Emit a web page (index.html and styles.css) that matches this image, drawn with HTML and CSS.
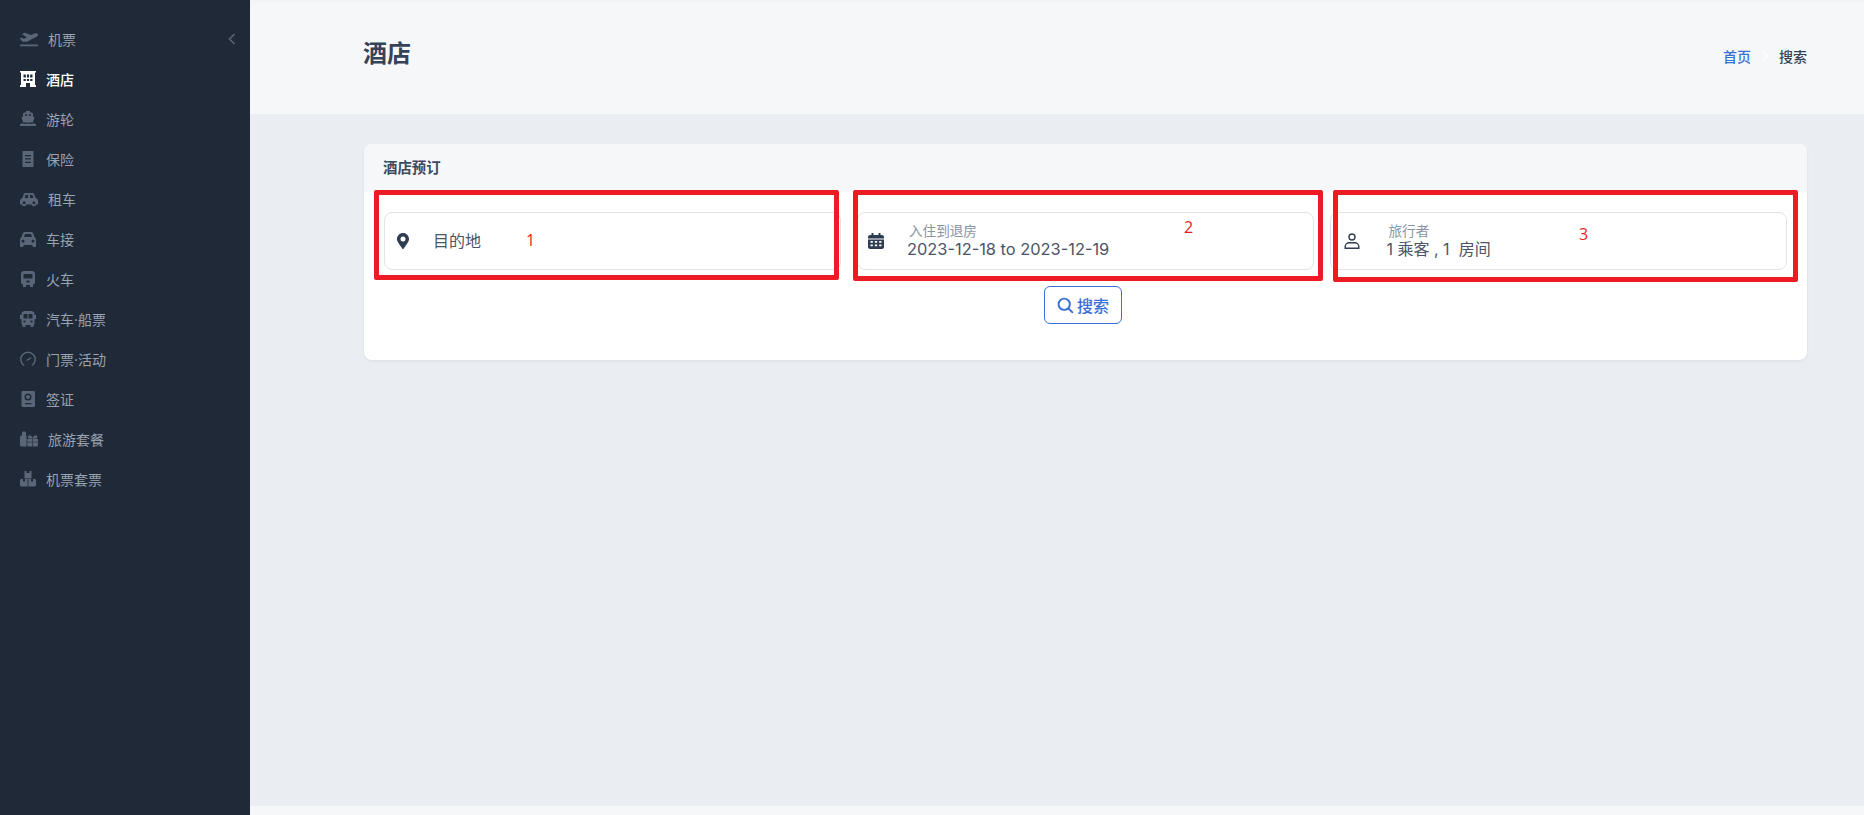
FILE: index.html
```html
<!DOCTYPE html>
<html lang="zh-CN">
<head>
  <meta charset="UTF-8">
  <meta name="viewport" content="width=device-width, initial-scale=1.0">
  <title>酒店</title>
  <link rel="stylesheet" href="styles.css">
</head>
<body>

<div class="layout">
  <aside class="sidebar">
    <ul class="nav">
      <li class="nav-item">
        <svg class="nav-icon wide" viewBox="0 0 640 512"><path d="M624 448H16c-8.84 0-16 7.16-16 16v32c0 8.84 7.16 16 16 16h608c8.84 0 16-7.16 16-16v-32c0-8.84-7.16-16-16-16zM80.55 341.27c6.28 6.84 15.1 10.72 24.33 10.71l130.54-.18a65.62 65.62 0 0 0 29.64-7.12l290.96-147.65c26.74-13.57 50.71-32.94 67.02-58.31 18.31-28.48 20.3-49.09 13.07-63.65-7.21-14.57-24.74-25.27-58.25-27.45-29.85-1.94-59.54 5.92-86.28 19.48l-98.51 49.99-218.7-82.06a17.8 17.8 0 0 0-18-1.11L90.62 67.29c-10.67 5.41-13.25 19.65-5.17 28.53l156.22 98.1-103.21 52.38-72.35-36.47a17.8 17.8 0 0 0-16.07.02L9.91 230.22c-10.44 5.3-13.19 19.12-5.57 28.08l76.21 82.97z"/></svg>
        <span>机票</span>
        <svg class="nav-caret" viewBox="0 0 8 12"><path d="M6.500 1 1.500 6l5 5"/></svg>
      </li>
      <li class="nav-item active">
        <svg class="nav-icon" viewBox="0 0 16 16"><path fill-rule="evenodd" d="M0 0h16v1.600h-1V14h1v2H10v-4H6v4H0v-2h1V1.600H0zM3.500 3.500v3h2.300v-3zm3.400 0v3h2.200v-3zm3.300 0v3h2.300v-3zM3.500 8v2h2.300V8zm3.400 0v2h2.200V8zm3.300 0v2h2.300V8z"/></svg>
        <span>酒店</span>
      </li>
      <li class="nav-item">
        <svg class="nav-icon" viewBox="0 0 16 16"><path fill-rule="evenodd" d="M6 0h4v1.500h1.500A1.500 1.500 0 0 1 13 3v2.500l1.500.8-1.700 5.200H3.200L1.500 6.300 3 5.500V3a1.500 1.500 0 0 1 1.500-1.500H6zM5 3.300v1.500h2.200V3.300zm3.800 0v1.500H11V3.300z"/><path d="M0 13c1.300 0 2-.6 2.700-.6s1.400.6 2.700.6 2-.6 2.600-.6 1.300.6 2.600.6 2-.6 2.700-.6 1.400.6 2.700.6v2H0z"/></svg>
        <span>游轮</span>
      </li>
      <li class="nav-item">
        <svg class="nav-icon" viewBox="0 0 16 16"><path fill-rule="evenodd" d="M2.500 0h11v16h-11zM5 4v1.300h6V4zm0 3.300v1.300h6V7.300zm0 3.400V12h6v-1.300z"/></svg>
        <span>保险</span>
      </li>
      <li class="nav-item">
        <svg class="nav-icon wide" viewBox="0 0 18 16"><path fill-rule="evenodd" d="M5.500 2h7c.8 0 1.500.5 1.800 1.200L15.600 7c1.400.4 2.400 1.500 2.400 3v2.500c0 .6-.4 1-1 1h-.7a2.500 2.500 0 0 1-4.800 0H6.500a2.500 2.500 0 0 1-4.800 0H1c-.6 0-1-.4-1-1V10c0-1.500 1-2.600 2.400-3l1.300-3.800C4 2.500 4.700 2 5.500 2zm.2 1.800L4.600 6.900h3.500V3.800zm4.200 0v3.100h3.500l-1.100-3.100zM4.100 10.200a1.500 1.500 0 1 0 0 3 1.500 1.500 0 0 0 0-3zm9.800 0a1.500 1.500 0 1 0 0 3 1.500 1.500 0 0 0 0-3z"/></svg>
        <span>租车</span>
      </li>
      <li class="nav-item">
        <svg class="nav-icon" viewBox="0 0 16 16"><path fill-rule="evenodd" d="M4.800 1h6.400c1 0 1.800.6 2.100 1.500L14.500 6.200c.9.500 1.500 1.400 1.500 2.500v6.300c0 .5-.4 1-1 1h-1.500c-.6 0-1-.5-1-1V14h-9v1c0 .5-.4 1-1 1H1c-.6 0-1-.5-1-1V8.700c0-1.100.6-2 1.500-2.500l1.200-3.700C3 1.600 3.800 1 4.800 1zm.3 2L4 6h8l-1.100-3zM3 8.500a1.500 1.500 0 1 0 0 3 1.500 1.500 0 0 0 0-3zm10 0a1.500 1.500 0 1 0 0 3 1.500 1.500 0 0 0 0-3z"/></svg>
        <span>车接</span>
      </li>
      <li class="nav-item">
        <svg class="nav-icon" viewBox="0 0 16 16"><path fill-rule="evenodd" d="M4 0h8c1.700 0 3 1.300 3 3v8c0 1.300-.8 2.300-2 2.800V16h-3v-2H6v2H3v-2.200C1.800 13.300 1 12.300 1 11V3c0-1.700 1.300-3 3-3zM3.500 3v4.500h9V3zM6.500 9.500v2h3v-2z"/></svg>
        <span>火车</span>
      </li>
      <li class="nav-item">
        <svg class="nav-icon" viewBox="0 0 16 16"><path fill-rule="evenodd" d="M5 0h6c2 0 3.500 1.300 3.500 3v1H16v4h-1.500v4.500c0 .8-.4 1.300-1 1.500v2h-3v-2h-5v2h-3v-2c-.6-.2-1-.7-1-1.500V8H0V4h1.500V3C1.500 1.300 3 0 5 0zM3.500 3v4.500h4V3zm5 0v4.500h4V3zM3.500 9.500v2h2v-2zm7 0v2h2v-2z"/></svg>
        <span>汽车·船票</span>
      </li>
      <li class="nav-item">
        <svg class="nav-icon gauge" viewBox="0 0 16 16"><path d="M4.200 14.500a7.200 7.200 0 1 1 7.600 0"/><path d="M6.500 9.500l4.500-2.700"/></svg>
        <span>门票·活动</span>
      </li>
      <li class="nav-item">
        <svg class="nav-icon" viewBox="0 0 16 16"><path fill-rule="evenodd" d="M3 0h10.500c.8 0 1.500.7 1.500 1.500v13c0 .8-.7 1.500-1.500 1.500H3c-.8 0-1.500-.7-1.500-1.500v-13C1.500.7 2.200 0 3 0zm5 2.500a3.500 3.500 0 1 0 0 7 3.500 3.500 0 0 0 0-7zm0 1.500a2 2 0 1 1 0 4 2 2 0 0 1 0-4zM5 12v1.200h6.500V12z"/></svg>
        <span>签证</span>
      </li>
      <li class="nav-item">
        <svg class="nav-icon wide" viewBox="0 0 18 16"><path d="M2 2C2 1.200 2.700.6 3.500.6h1C5.300.6 6 1.200 6 2v2.500h.6V15.500H1.500C.7 15.500 0 14.800 0 14V6c0-.8.700-1.500 1.500-1.500H2z"/><path d="M7.300 8h5v2.800h-5zM12.900 8H18v2.800h-5.100zM7.300 11.300h5v4.200H8.800c-.8 0-1.500-.7-1.500-1.500zM12.900 11.300H18V14c0 .8-.7 1.500-1.500 1.500h-3.600zM9.500 4.200c1.300 0 2.300 1.200 3.100 3.100.8-1.900 1.900-3.100 3.200-3.100 1.500 0 2 1.700.9 3.300H8.600c-1.100-1.600-.6-3.300.9-3.300z"/></svg>
        <span>旅游套餐</span>
      </li>
      <li class="nav-item">
        <svg class="nav-icon" viewBox="0 0 16 16"><path d="M4.500 0h2v2h3V0h2v7.400h-7zM0 9.500C0 8.700.7 8 1.500 8H3v2.500h2V8h2.600v7.500H1.500C.7 15.500 0 14.800 0 14zM8.400 8H11v2.500h2V8h1.500c.8 0 1.500.7 1.500 1.500V14c0 .8-.7 1.500-1.500 1.500H8.400z"/></svg>
        <span>机票套票</span>
      </li>
    </ul>
  </aside>

  <div class="main">
    <header class="page-header">
      <h1>酒店</h1>
      <nav class="crumbs">
        <a class="crumb-link">首页</a>
        <svg class="crumb-sep" viewBox="0 0 8 12"><path d="M1.500 1l5 5-5 5"/></svg>
        <span>搜索</span>
      </nav>
    </header>

    <section class="card">
      <div class="card-header">酒店预订</div>
      <div class="card-body">
        <div class="fields">
          <div class="field place">
            <svg class="field-icon" viewBox="0 0 384 512"><path fill="currentColor" d="M172.300 501.700C27 291 0 266 0 192 0 86 86 0 192 0s192 86 192 192c0 74-27 99-172.300 309.700-9.500 13.700-29.900 13.700-39.400 0zM192 272a80 80 0 1 0 0-160 80 80 0 0 0 0 160z"/></svg>
            <div class="field-text">
              <div class="field-value">目的地</div>
            </div>
          </div>
          <div class="field">
            <svg class="field-icon" viewBox="0 0 16 16"><path fill="currentColor" fill-rule="evenodd" d="M3.500 0h2v2h5V0h2v2H14c1 0 2 .8 2 2v1.500H0V4c0-1.200 1-2 2-2h1.500zM0 6.500h16V14c0 1.200-1 2-2 2H2c-1 0-2-.8-2-2zM2.500 8v1.800h2.300V8zm4.300 0v1.800h2.400V8zm4.400 0v1.800h2.300V8zM2.500 11.500v1.800h2.300v-1.800zm4.300 0v1.800h2.400v-1.800zm4.400 0v1.800h2.300v-1.800z"/></svg>
            <div class="field-text">
              <div class="field-label">入住到退房</div>
              <div class="field-value date">2023-12-18 to 2023-12-19</div>
            </div>
          </div>
          <div class="field traveler">
            <svg class="field-icon person" viewBox="0 0 16 16"><circle cx="8" cy="4" r="3"/><path d="M1.200 15.200v-1.400c0-2.200 1.800-4 4-4h5.600c2.200 0 4 1.800 4 4v1.400z"/></svg>
            <div class="field-text">
              <div class="field-label">旅行者</div>
              <div class="field-value">1 乘客 , 1  房间</div>
            </div>
          </div>
        </div>
        <div class="actions">
          <button class="search-btn" type="button">
            <svg class="search-icon" viewBox="0 0 16 16"><circle cx="6.800" cy="6.800" r="5.300"/><path d="M10.800 10.800 15 15"/></svg>
            搜索
          </button>
        </div>
      </div>
    </section>

    <footer class="page-footer"></footer>
  </div>
</div>

<!-- annotation boxes drawn over the screenshot -->
<div class="mark mark-1"></div>
<div class="mark mark-2"></div>
<div class="mark mark-3"></div>
<span class="mark-num num-1">1</span>
<span class="mark-num num-2">2</span>
<span class="mark-num num-3">3</span>

</body>
</html>
```

FILE: styles.css
```css
* {
  box-sizing: border-box;
}

body {
  margin: 0;
  font-family: Inter, 'Noto Sans CJK SC', sans-serif;
  background: #eaedf2;
  color: #3d4a5e;
  overflow: hidden;
}

.layout {
  display: flex;
  height: 100vh;
}

.sidebar {
  flex: 0 0 250px;
  background: #1f2937;
  padding-top: 19px;
}

.nav {
  list-style: none;
  margin: 0;
  padding: 0;
}

.nav-item {
  display: flex;
  align-items: center;
  gap: 10px;
  height: 40px;
  padding: 0 20px;
  font-size: 14px;
  color: #98a2b1;
}

.nav-item.active {
  color: #fff;
  font-weight: 500;
}

.nav-icon {
  width: 16px;
  height: 16px;
  flex: none;
  fill: #5a6678;
}

.nav-icon.wide {
  width: 18px;
}

.nav-item.active .nav-icon {
  fill: #fff;
}

.nav-icon.gauge {
  fill: none;
  stroke: #5a6678;
  stroke-width: 1.4;
}

.nav-caret {
  width: 8px;
  height: 12px;
  margin-left: auto;
  margin-right: -6px;
  fill: none;
  stroke: #5a6678;
  stroke-width: 1.6;
}

.main {
  flex: 1;
  display: flex;
  flex-direction: column;
  min-width: 0;
}

.page-header {
  flex: 0 0 114px;
  display: flex;
  align-items: center;
  justify-content: space-between;
  padding: 0 57px 15px 113px;
  background: #f6f7f9;
  border-top: 3px solid #f3f4f6;
}

.page-header h1 {
  margin: 0;
  font-size: 24px;
  font-weight: 600;
  color: #364356;
}

.crumbs {
  display: flex;
  align-items: center;
  gap: 10px;
  margin-top: 10px;
  font-size: 14px;
  font-weight: 500;
  color: #364356;
}

.crumb-link {
  color: #3b6fd8;
}

.crumb-sep {
  width: 8px;
  height: 12px;
  fill: none;
  stroke: #fff;
  stroke-width: 1.6;
}

.card {
  margin: 30px 57px 0 114px;
  background: #fff;
  border-radius: 8px;
  overflow: hidden;
  box-shadow: 0 1px 3px rgba(45, 55, 72, 0.08);
}

.card-header {
  height: 48px;
  line-height: 48px;
  padding: 0 19px;
  background: #f6f7f9;
  font-size: 14.4px;
  font-weight: 600;
}

.card-body {
  height: 168px;
  padding: 20px 20px 0;
}

.fields {
  display: grid;
  grid-template-columns: repeat(3, 1fr);
  gap: 16px;
}

.field {
  display: flex;
  align-items: center;
  height: 58px;
  padding-left: 10px;
  border: 1px solid #dfe3ea;
  border-radius: 8px;
}

.field-icon {
  width: 16px;
  height: 16px;
  flex: none;
  color: #2f3d52;
}

.field-icon.person {
  fill: none;
  stroke: #2f3d52;
  stroke-width: 1.4;
}

.field-text {
  margin-left: 23px;
}

.place .field-text {
  margin-left: 22px;
}

.traveler {
  padding-left: 13px;
}

.traveler .field-text {
  margin-left: 26.5px;
}

.field-label {
  padding-left: 2px;
  font-size: 13.6px;
  line-height: 16px;
  color: #8b94a3;
}

.field-value {
  font-size: 16px;
  line-height: 20px;
  color: #4a5568;
  white-space: pre;
}

.field-value.date {
  font-size: 16.4px;
}

.actions {
  display: flex;
  justify-content: center;
  margin-top: 16px;
}

.search-btn {
  display: flex;
  align-items: center;
  gap: 3px;
  width: 78px;
  height: 38px;
  margin-right: 5px;
  padding: 0 0 0 12px;
  background: #fff;
  border: 1px solid #3b6fd8;
  border-radius: 6px;
  color: #3b6fd8;
  font-family: inherit;
  font-size: 16px;
  font-weight: 500;
}

.search-icon {
  width: 17px;
  height: 17px;
  flex: none;
  fill: none;
  stroke: #3b6fd8;
  stroke-width: 1.8;
}

.page-footer {
  margin-top: auto;
  flex: 0 0 9px;
  background: #f6f7f9;
}

/* red annotations on top of the page */
.mark {
  position: absolute;
  border: 5px solid #ed1c24;
  border-radius: 2px;
}

.mark-1 {
  left: 374px;
  top: 190px;
  width: 465px;
  height: 90px;
}

.mark-2 {
  left: 853px;
  top: 190px;
  width: 470px;
  height: 91px;
}

.mark-3 {
  left: 1333px;
  top: 190px;
  width: 465px;
  height: 92px;
}

.mark-num {
  position: absolute;
  font-family: 'Open Sans', sans-serif;
  font-size: 16px;
  line-height: 20px;
  color: #ed1c24;
}

.num-1 {
  left: 526px;
  top: 230px;
}

.num-2 {
  left: 1184px;
  top: 217px;
}

.num-3 {
  left: 1579px;
  top: 224px;
}
```
